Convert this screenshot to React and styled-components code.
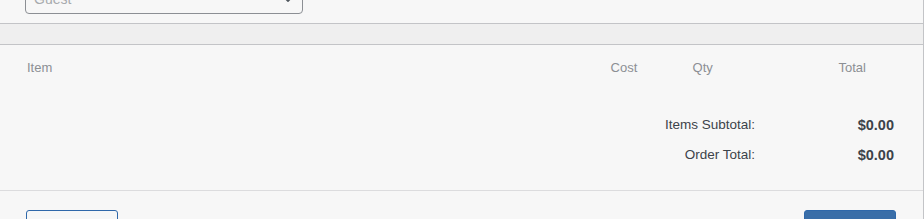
import React from "react";
import styled, { createGlobalStyle } from "styled-components";

const GlobalStyle = createGlobalStyle`
  html, body {
    margin: 0;
    padding: 0;
    background: #f7f7f7;
    font-family: "Liberation Sans", Arial, sans-serif;
    overflow: hidden;
  }
`;

const Page = styled.div`
  width: 924px;
  height: 219px;
  border-right: 1px solid #c3c4c7;
  box-sizing: border-box;
  overflow: hidden;
`;

const TopArea = styled.div`
  height: 23px;
  display: flex;
  align-items: flex-end;
  padding: 0 0 0 25px;
  border-bottom: 1px solid #c3c4c7;
`;

const Select = styled.div`
  flex: none;
  width: 278px;
  height: 30px;
  margin-bottom: 9px;
  border: 1px solid #8c8f94;
  border-radius: 4px;
  box-sizing: border-box;
  display: flex;
  align-items: center;
  justify-content: space-between;
  padding: 0 9px 0 8px;
  font-size: 14px;
  color: #a7aaad;
  background: #f7f7f7;
`;

const Band = styled.div`
  height: 20px;
  background: #efefef;
  border-bottom: 1px solid #c3c4c7;
`;

const Panel = styled.div`
  background: #f7f7f7;
`;

const HeadRow = styled.div`
  display: grid;
  grid-template-columns: 1fr 82px 146px auto;
  padding: 15px 57px 0 27px;
  height: 29px;
  font-size: 13px;
  color: #8c8f94;
  line-height: 15px;
`;

const Totals = styled.div`
  display: grid;
  grid-template-columns: 1fr 139px;
  row-gap: 14px;
  padding: 28px 29px 27px 0;
  font-size: 13.5px;
  line-height: 16px;
  color: #3c434a;
  border-bottom: 1px solid #dcdcde;
`;

const Label = styled.div`
  text-align: right;
`;

const Value = styled.div`
  text-align: right;
  font-weight: bold;
  font-size: 14.5px;
`;

const Footer = styled.div`
  display: flex;
  justify-content: space-between;
  padding: 19px 27px 0 26px;
`;

const Button = styled.div`
  width: 92px;
  height: 32px;
  border-radius: 3px;
  box-sizing: border-box;
  border: 1px solid #2f68aa;
  background: ${(p) => (p.primary ? "#3a6ea8" : "#f6f7f7")};
`;

const App = () => {
  return (
    <>
      <GlobalStyle />
      <Page>
        <TopArea>
          <Select>
            <span>Guest</span>
            <svg width="10" height="6" viewBox="0 0 10 6">
              <path d="M1 1l4 4 4-4" fill="none" stroke="#50575e" strokeWidth="1.8" />
            </svg>
          </Select>
        </TopArea>
        <Band />
        <Panel>
          <HeadRow>
            <div>Item</div>
            <div>Cost</div>
            <div>Qty</div>
            <div>Total</div>
          </HeadRow>
          <Totals>
            <Label>Items Subtotal:</Label>
            <Value>$0.00</Value>
            <Label>Order Total:</Label>
            <Value>$0.00</Value>
          </Totals>
          <Footer>
            <Button />
            <Button primary />
          </Footer>
        </Panel>
      </Page>
    </>
  );
};

export default App;
